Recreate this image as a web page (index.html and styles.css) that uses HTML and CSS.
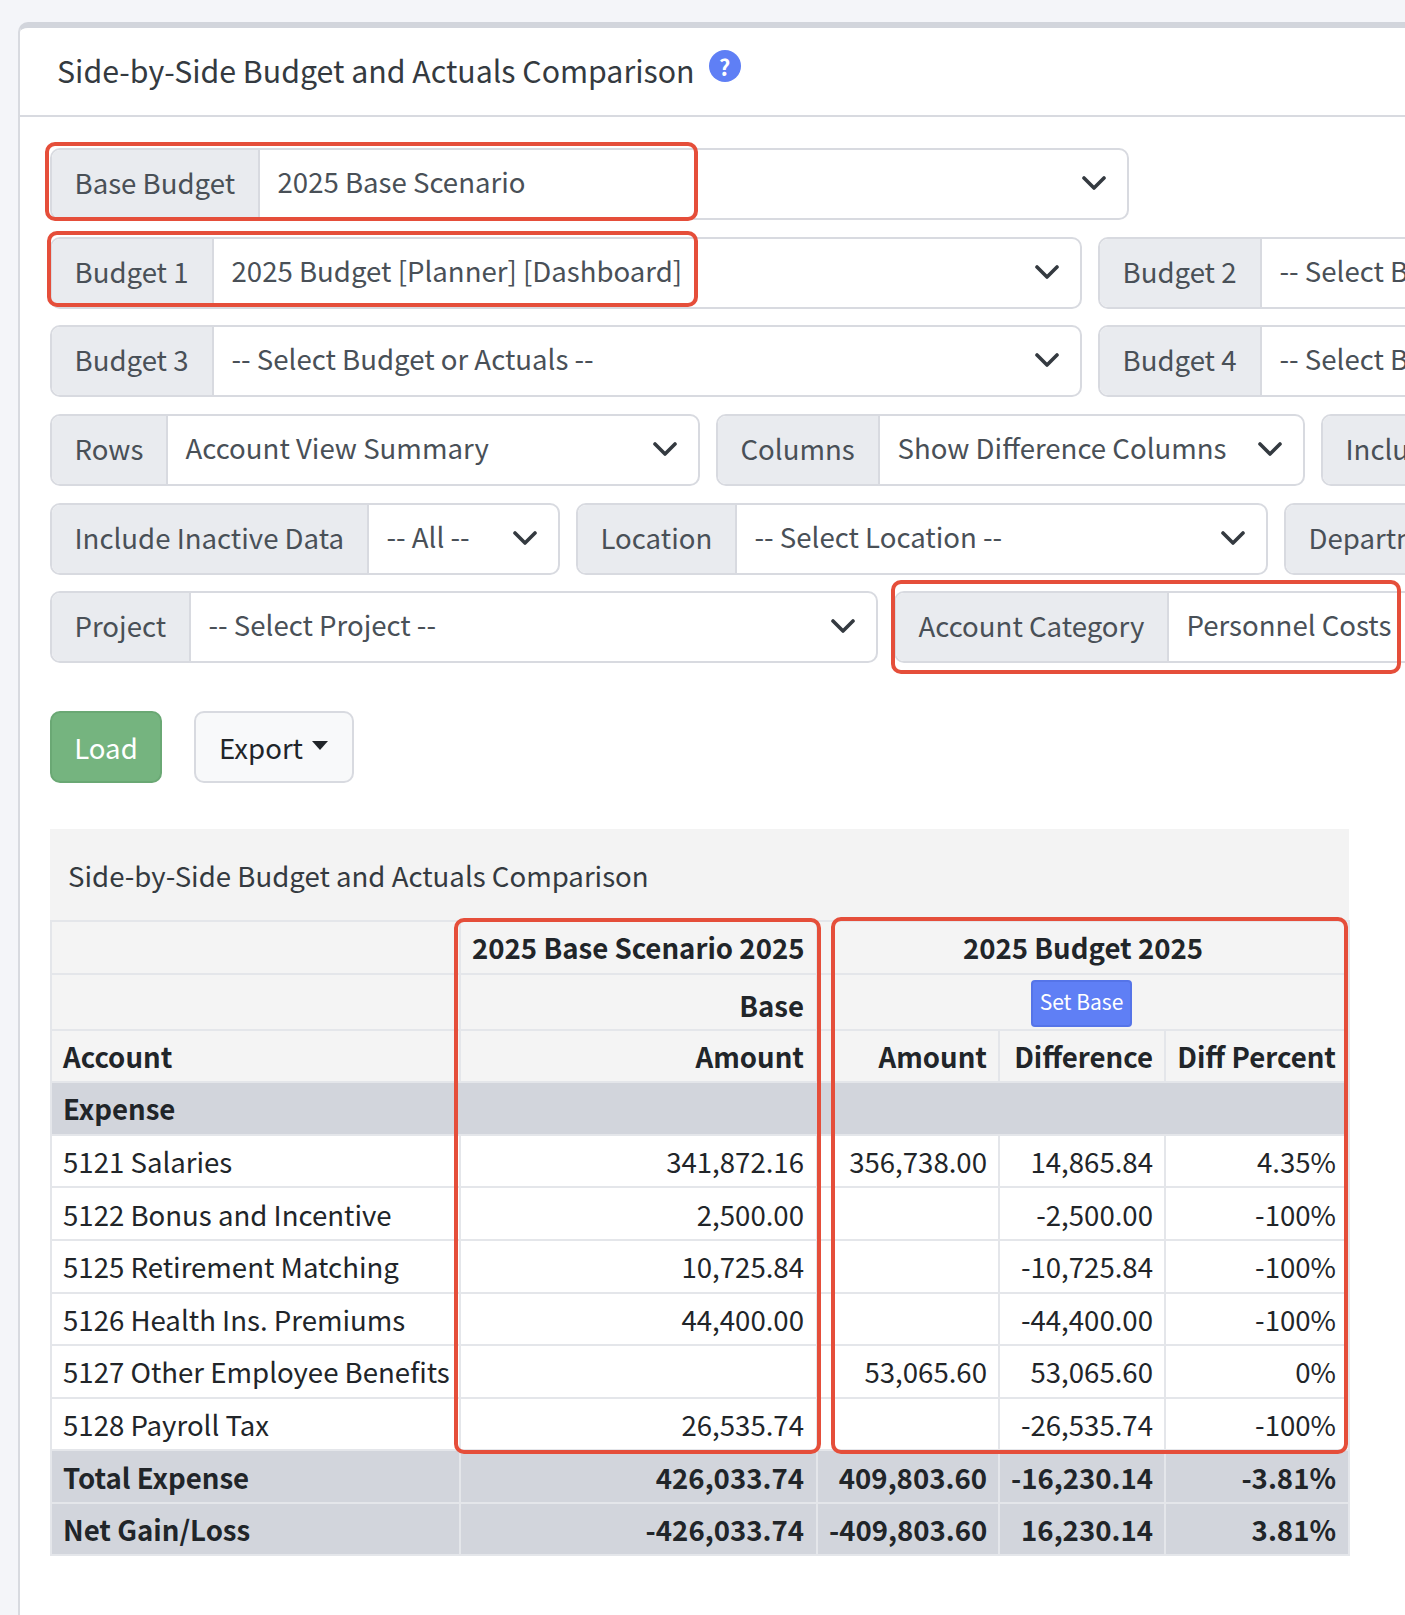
FILE: index.html
```html
<!DOCTYPE html>
<html lang="en">
<head>
<meta charset="utf-8">
<title>Side-by-Side Budget and Actuals Comparison</title>
<link rel="stylesheet" href="styles.css">
</head>
<body>
<div class="card">
  <header class="card-head">
    <h1 class="card-title">Side-by-Side Budget and Actuals Comparison</h1>
    <span class="help">?</span>
  </header>
  <div class="card-body">
    <div class="filter-row">
      <div class="group w-base"><span class="lab lab-base">Base Budget</span><span class="sel">2025 Base Scenario<svg class="chev" viewBox="0 0 24 14"><path d="M2 2l10 10L22 2"/></svg></span></div>
    </div>
    <div class="filter-row">
      <div class="group w-half"><span class="lab lab-budget">Budget 1</span><span class="sel">2025 Budget [Planner] [Dashboard]<svg class="chev" viewBox="0 0 24 14"><path d="M2 2l10 10L22 2"/></svg></span></div>
      <div class="group w-half"><span class="lab lab-budget">Budget 2</span><span class="sel">-- Select Budget or Actuals --<svg class="chev" viewBox="0 0 24 14"><path d="M2 2l10 10L22 2"/></svg></span></div>
    </div>
    <div class="filter-row">
      <div class="group w-half"><span class="lab lab-budget">Budget 3</span><span class="sel">-- Select Budget or Actuals --<svg class="chev" viewBox="0 0 24 14"><path d="M2 2l10 10L22 2"/></svg></span></div>
      <div class="group w-half"><span class="lab lab-budget">Budget 4</span><span class="sel">-- Select Budget or Actuals --<svg class="chev" viewBox="0 0 24 14"><path d="M2 2l10 10L22 2"/></svg></span></div>
    </div>
    <div class="filter-row">
      <div class="group w-rows"><span class="lab lab-rows">Rows</span><span class="sel">Account View Summary<svg class="chev" viewBox="0 0 24 14"><path d="M2 2l10 10L22 2"/></svg></span></div>
      <div class="group w-cols"><span class="lab lab-cols">Columns</span><span class="sel">Show Difference Columns<svg class="chev" viewBox="0 0 24 14"><path d="M2 2l10 10L22 2"/></svg></span></div>
      <div class="group w-half"><span class="lab">Include</span><span class="sel"></span></div>
    </div>
    <div class="filter-row">
      <div class="group w-inactive"><span class="lab lab-inactive">Include Inactive Data</span><span class="sel">-- All --<svg class="chev" viewBox="0 0 24 14"><path d="M2 2l10 10L22 2"/></svg></span></div>
      <div class="group w-loc"><span class="lab lab-loc">Location</span><span class="sel">-- Select Location --<svg class="chev" viewBox="0 0 24 14"><path d="M2 2l10 10L22 2"/></svg></span></div>
      <div class="group w-half"><span class="lab">Department</span><span class="sel"></span></div>
    </div>
    <div class="filter-row">
      <div class="group w-proj"><span class="lab lab-proj">Project</span><span class="sel">-- Select Project --<svg class="chev" viewBox="0 0 24 14"><path d="M2 2l10 10L22 2"/></svg></span></div>
      <div class="group w-half"><span class="lab lab-cat">Account Category</span><span class="sel">Personnel Costs</span></div>
    </div>
    <div class="actions">
      <button class="btn btn-load">Load</button>
      <button class="btn btn-export">Export<span class="caret"></span></button>
    </div>
    <div class="report">
      <div class="report-title">Side-by-Side Budget and Actuals Comparison</div>
      <table class="grid">
        <colgroup><col class="c1"><col class="c2"><col class="c3"><col class="c4"><col class="c5"></colgroup>
        <thead>
          <tr><th></th><th class="num">2025 Base Scenario 2025</th><th class="mid" colspan="3">2025 Budget 2025</th></tr>
          <tr class="tall"><th></th><th class="num">Base</th><th class="mid" colspan="3"><button class="set-base">Set Base</button></th></tr>
          <tr><th class="left">Account</th><th class="num">Amount</th><th class="num">Amount</th><th class="num">Difference</th><th class="num">Diff Percent</th></tr>
        </thead>
        <tbody>
          <tr class="band"><td colspan="5">Expense</td></tr>
          <tr><td>5121 Salaries</td><td class="num">341,872.16</td><td class="num">356,738.00</td><td class="num">14,865.84</td><td class="num">4.35%</td></tr>
          <tr><td>5122 Bonus and Incentive</td><td class="num">2,500.00</td><td></td><td class="num">-2,500.00</td><td class="num">-100%</td></tr>
          <tr><td>5125 Retirement Matching</td><td class="num">10,725.84</td><td></td><td class="num">-10,725.84</td><td class="num">-100%</td></tr>
          <tr><td>5126 Health Ins. Premiums</td><td class="num">44,400.00</td><td></td><td class="num">-44,400.00</td><td class="num">-100%</td></tr>
          <tr><td>5127 Other Employee Benefits</td><td></td><td class="num">53,065.60</td><td class="num">53,065.60</td><td class="num">0%</td></tr>
          <tr><td>5128 Payroll Tax</td><td class="num">26,535.74</td><td></td><td class="num">-26,535.74</td><td class="num">-100%</td></tr>
          <tr class="band"><td>Total Expense</td><td class="num">426,033.74</td><td class="num">409,803.60</td><td class="num">-16,230.14</td><td class="num">-3.81%</td></tr>
          <tr class="band"><td>Net Gain/Loss</td><td class="num">-426,033.74</td><td class="num">-409,803.60</td><td class="num">16,230.14</td><td class="num">3.81%</td></tr>
        </tbody>
      </table>
    </div>
  </div>
</div>
<div class="mark mark-base"></div>
<div class="mark mark-b1"></div>
<div class="mark mark-cat"></div>
<div class="mark mark-col1"></div>
<div class="mark mark-col2"></div>
</body>
</html>
```

FILE: styles.css
```css
* { box-sizing: border-box; }
html, body { margin: 0; padding: 0; }
body {
  width: 1405px;
  height: 1615px;
  overflow: hidden;
  position: relative;
  background: #f4f5f9;
  font-family: "Noto Sans CJK SC", "Noto Sans", sans-serif;
  font-size: 27.6px;
  color: #212529;
}
.card {
  position: relative;
  width: 1600px;
  height: 1593px;
  margin: 22px 0 0 18px;
  background: #fff;
  border-left: 2px solid #d8dae0;
  border-top: 6px solid #d2d5dc;
  border-top-left-radius: 10px;
}
.card-head {
  display: flex;
  align-items: center;
  height: 89px;
  padding-left: 37px;
  padding-bottom: 4px;
  border-bottom: 2px solid #d8dae0;
}
.card-title {
  margin: 0;
  font-size: 30.3px;
  font-weight: 400;
  line-height: 40px;
  color: #343a40;
}
.help {
  width: 32px;
  height: 32px;
  margin: -8px 0 0 14px;
  border-radius: 50%;
  background: #5f7ff5;
  color: #fff;
  font-size: 22px;
  font-weight: 700;
  line-height: 32px;
  text-align: center;
}
.card-body { padding: 31px 0 0 30px; }
.filter-row {
  display: flex;
  gap: 16px;
  height: 72px;
  margin-bottom: 16.7px;
}
.group {
  display: flex;
  flex: none;
  height: 72px;
  border: 2px solid #d8dae0;
  border-radius: 10px;
  overflow: hidden;
  background: #fff;
  color: #495057;
  line-height: 63px;
}
.w-base { width: 1079px; }
.w-half { width: 1032px; }
.w-rows { width: 650px; }
.w-cols { width: 589px; }
.w-inactive { width: 510px; }
.w-loc { width: 692px; }
.w-proj { width: 828px; }
.lab {
  flex: none;
  padding: 1px 22.5px 0;
  background: #e9ebef;
  border-right: 2px solid #d8dae0;
  white-space: nowrap;
}
.lab-base { width: 208px; }
.lab-budget { width: 162px; }
.lab-rows { width: 116px; }
.lab-cols { width: 162px; }
.lab-inactive { width: 317px; }
.lab-loc { width: 159px; }
.lab-proj { width: 139px; }
.lab-cat { width: 273px; }
.sel {
  position: relative;
  flex: 1;
  padding: 0 0 0 17.5px;
  white-space: nowrap;
}
.chev {
  position: absolute;
  right: 21px;
  top: 26px;
  width: 24px;
  height: 14px;
  fill: none;
  stroke: #343a40;
  stroke-width: 3.6;
  stroke-linecap: round;
  stroke-linejoin: round;
}
.actions {
  display: flex;
  gap: 32px;
  margin-top: 47.5px;
}
.btn {
  height: 72px;
  padding: 0 23px;
  border-radius: 10px;
  font: inherit;
  line-height: 62px;
}
.btn-load {
  width: 112px;
  padding: 0 22px;
  background: #75b47f;
  border: 2px solid #6aa874;
  color: #fff;
}
.btn-export {
  width: 160px;
  background: #f8f9fa;
  border: 2px solid #d8dae0;
  color: #212529;
  white-space: nowrap;
  text-align: left;
}
.caret {
  display: inline-block;
  margin-left: 9px;
  vertical-align: 9px;
  border-top: 9px solid #212529;
  border-left: 8.5px solid transparent;
  border-right: 8.5px solid transparent;
}
.report {
  width: 1299px;
  margin-top: 46px;
  background: #f3f3f3;
}
.report-title {
  height: 91px;
  padding: 26px 0 0 18px;
  line-height: 40px;
  color: #343a40;
}
.grid {
  width: 1298px;
  table-layout: fixed;
  border-collapse: collapse;
  background: #fff;
}
.c1 { width: 409px; }
.c2 { width: 357px; }
.c3 { width: 182px; }
.c4 { width: 166px; }
.c5 { width: 184px; }
.grid th, .grid td {
  height: 52.6px;
  padding: 0 12px 0 11px;
  border: 2px solid #e4e6ea;
  line-height: 44px;
  white-space: nowrap;
  color: #212529;
}
.grid th { background: #f4f4f4; font-weight: 700; }
.grid td:nth-child(3), .grid th:nth-child(3),
.grid td:nth-child(4), .grid th:nth-child(4) { padding-right: 11px; }
.grid .tall th { height: 56px; }
.grid .tall th.num { padding-top: 6px; }
.grid td.num, .grid th.num { text-align: right; }
.grid th.left { text-align: left; }
.grid th.mid { text-align: center; }
.band td { background: #d2d5dc; font-weight: 700; }
.set-base {
  height: 47px;
  width: 101px;
  margin-right: 3px;
  padding: 0 0 4px;
  vertical-align: middle;
  background: #5f7ff5;
  border: 2px solid #5574e8;
  border-radius: 4px;
  color: #fff;
  font: inherit;
  font-size: 21px;
  font-weight: 400;
  line-height: 36px;
}
.mark {
  position: absolute;
  border: 4px solid #e54e3a;
  border-radius: 10px;
  pointer-events: none;
}
.mark-base { left: 45px; top: 142px; width: 653px; height: 79px; }
.mark-b1 { left: 47px; top: 231px; width: 651px; height: 76px; }
.mark-cat { left: 891px; top: 580px; width: 510px; height: 94px; }
.mark-col1 { left: 454px; top: 918px; width: 367px; height: 536px; }
.mark-col2 { left: 831px; top: 917px; width: 517px; height: 537px; }
```
